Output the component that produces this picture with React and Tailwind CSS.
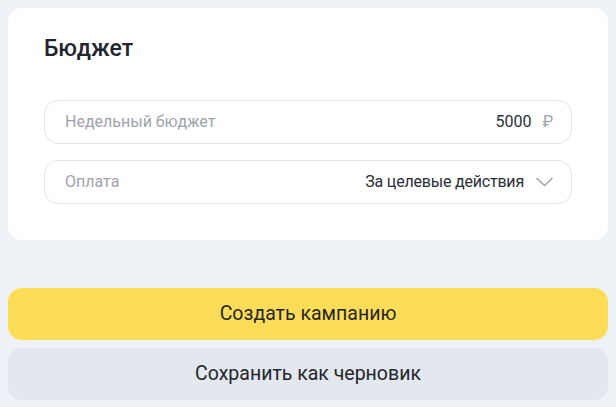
export default function App() {
  return (
    <div className="w-[616px] h-[407px] bg-[#eef1f6] px-2 pt-2 flex flex-col" style={{ fontFamily: "Roboto, 'Noto Sans', sans-serif" }}>
      <div className="bg-white rounded-[14px] h-[232px] px-9 pt-[26px]">
        <h2 className="text-[23px] leading-[30px] font-medium text-[#21252e]">Бюджет</h2>
        <div className="mt-[36px] flex flex-col gap-4">
          <div className="h-[44px] rounded-[14px] border border-[#e4e6ec] flex items-center pl-5 pr-[18px] text-[16px]">
            <span className="text-[#9ea3ad]">Недельный бюджет</span>
            <span className="ml-auto text-[#2a2e37]">5000</span>
            <span className="ml-[11px] text-[#9ea3ad]">₽</span>
          </div>
          <div className="h-[44px] rounded-[14px] border border-[#e4e6ec] flex items-center pl-5 pr-[18px] text-[16px]">
            <span className="text-[#9ea3ad]">Оплата</span>
            <span className="ml-auto text-[#2a2e37] tracking-[-0.2px]">За целевые действия</span>
            <svg className="ml-[12px]" width="17" height="10" viewBox="0 0 17 10" fill="none">
              <path d="M1 1.5 L8.5 8.5 L16 1.5" stroke="#9ea3ad" strokeWidth="1.6" strokeLinecap="round" strokeLinejoin="round" />
            </svg>
          </div>
        </div>
      </div>
      <div className="mt-auto flex flex-col gap-2 pb-[7px]">
        <button className="h-[52px] rounded-[14px] bg-[#fddc57] text-[19.5px] text-[#24262b]">Создать кампанию</button>
        <button className="h-[52px] rounded-[14px] bg-[#e3e7ee] text-[19.5px] text-[#24262b]">Сохранить как черновик</button>
      </div>
    </div>
  );
}
